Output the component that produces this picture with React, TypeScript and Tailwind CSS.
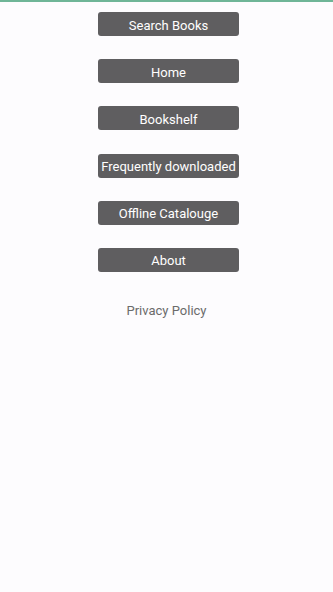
const items = ["Search Books", "Home", "Bookshelf", "Frequently downloaded", "Offline Catalouge", "About"];

export default function App() {
  return (
    <div className="min-h-[592px] w-full bg-[#fdfcfe] font-['Roboto',sans-serif]">
      <div className="h-[2px] bg-[#6fb597]" />
      <div className="flex flex-col items-center gap-[23.2px] pt-[10px]">
        {items.map((label) => (
          <button
            key={label}
            className="ml-[4px] flex h-[24px] w-[141px] items-center justify-center whitespace-nowrap rounded-[3px] bg-[#5f5e60] pt-[2px] text-[13px] leading-none text-white"
          >
            {label}
          </button>
        ))}
      </div>
      <p className="mt-[29px] text-center text-[13px] leading-[20px] text-[#6b6b6b]">Privacy Policy</p>
    </div>
  );
}
